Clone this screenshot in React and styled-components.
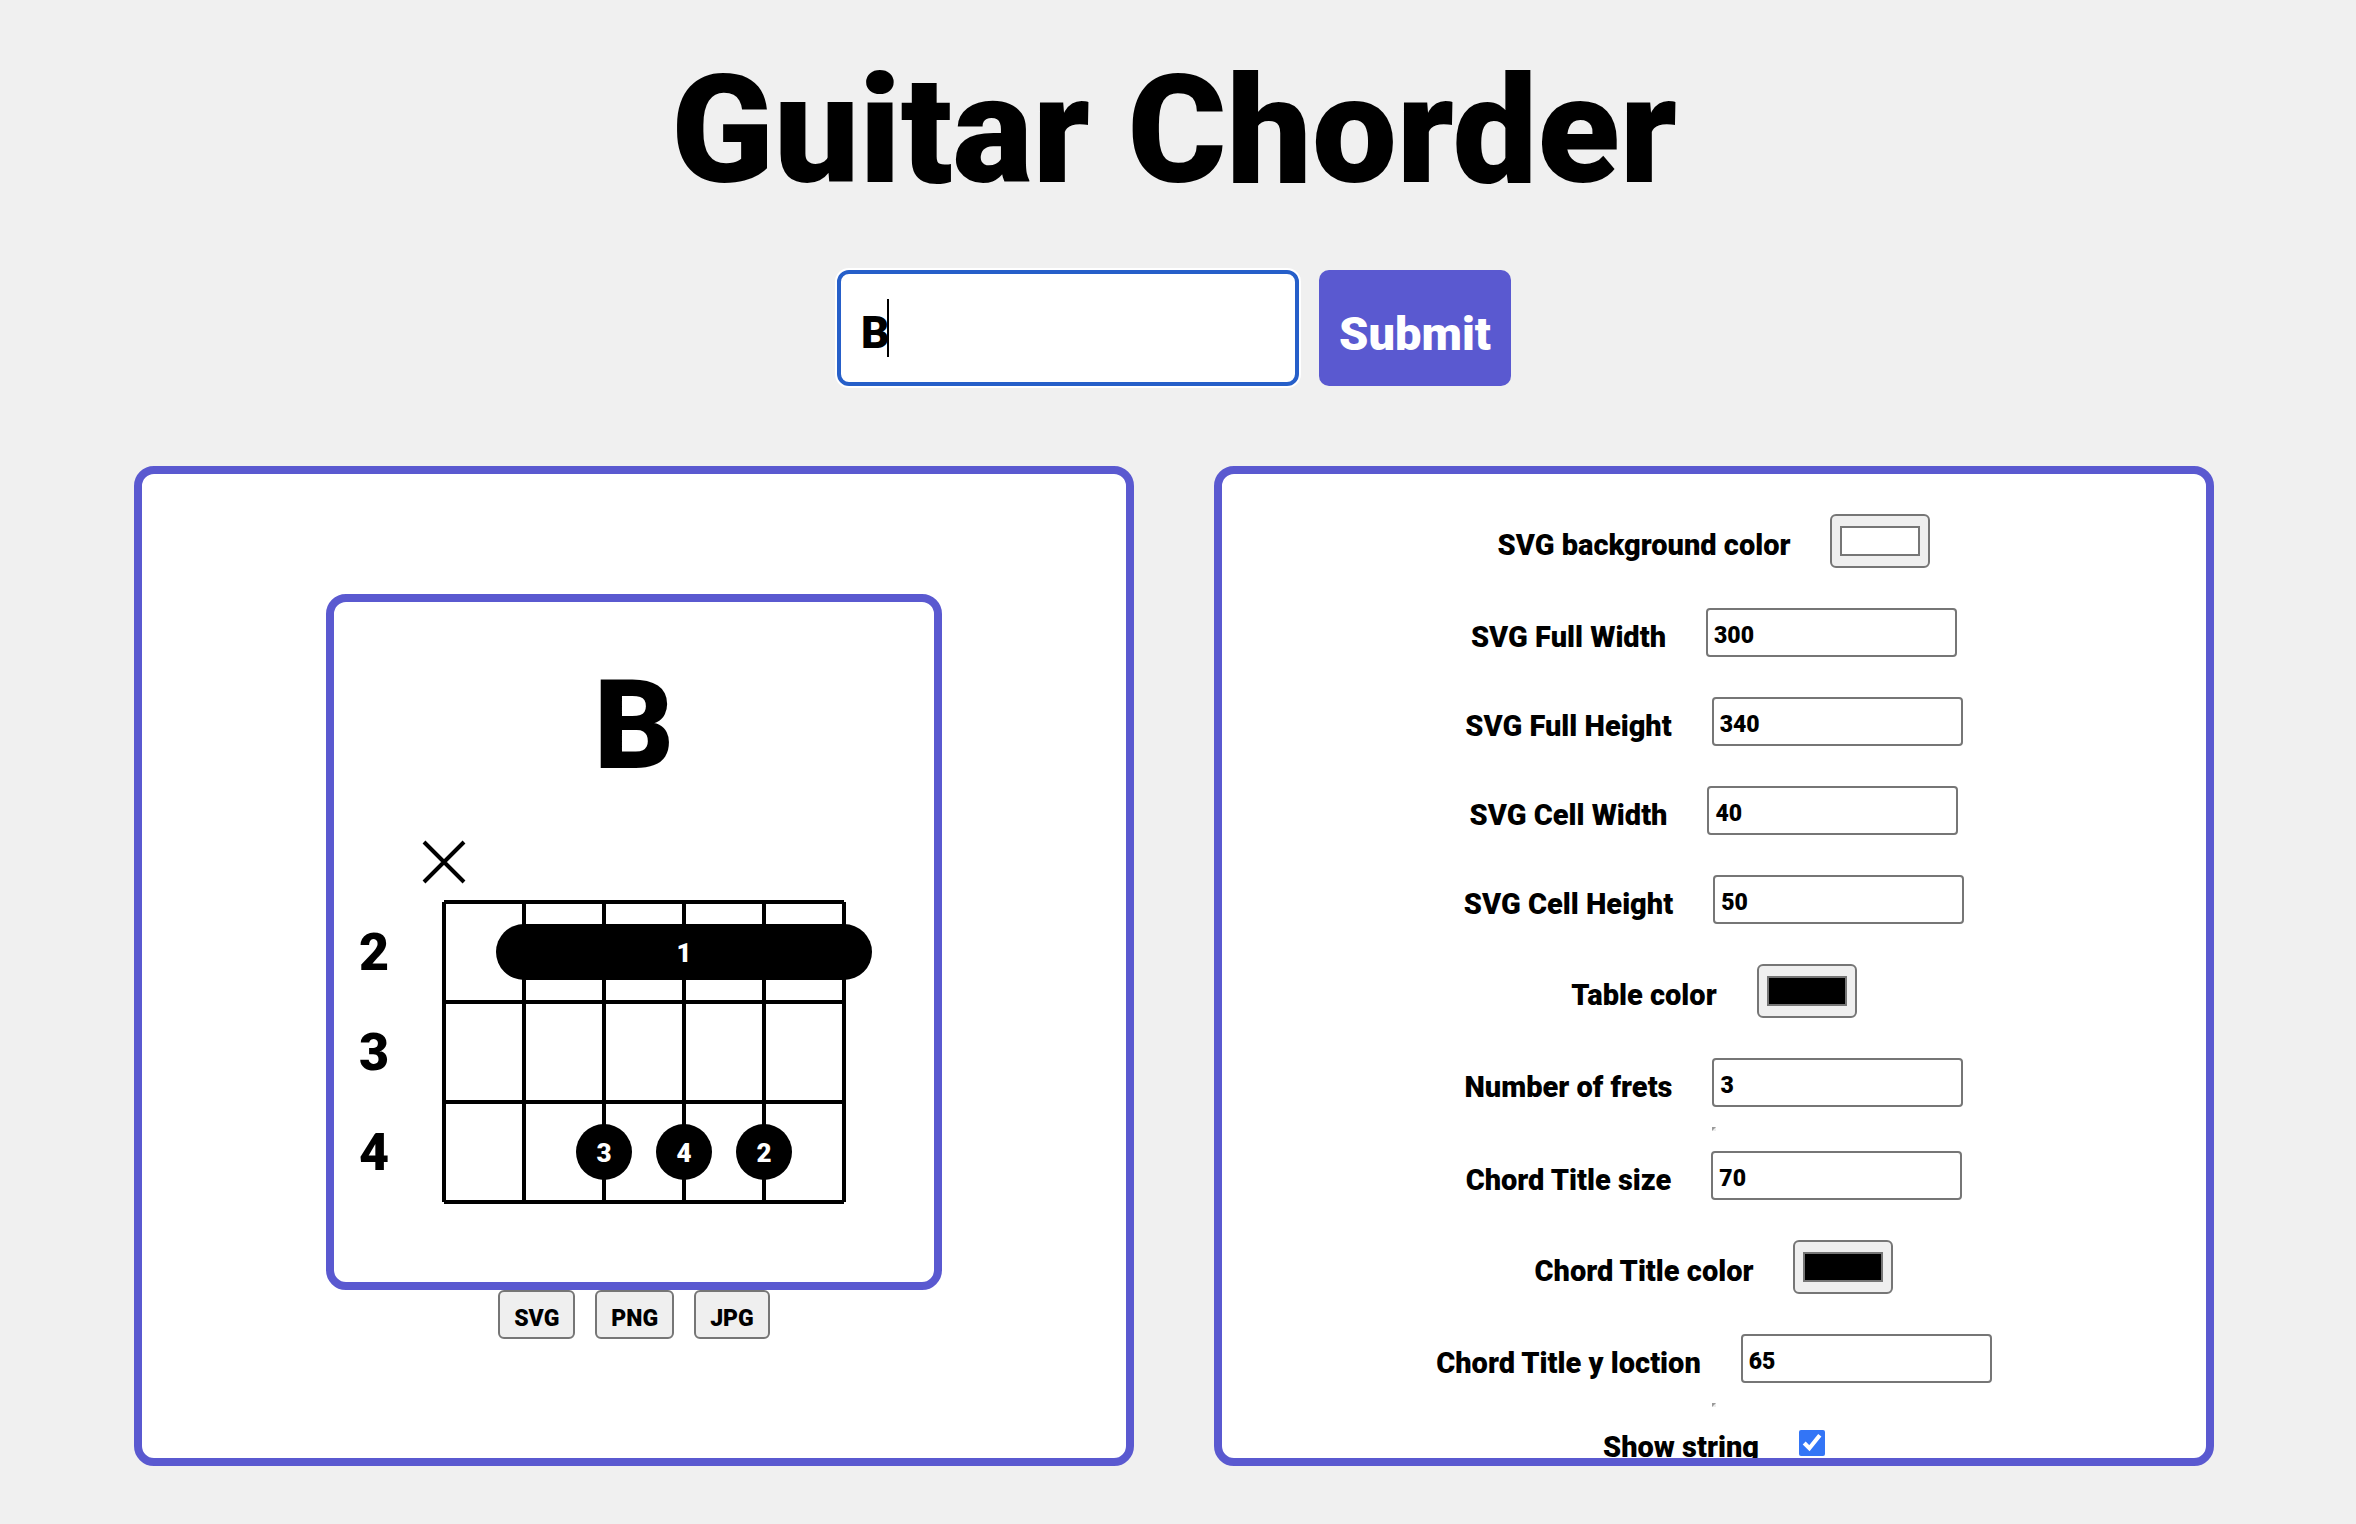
import React, { useState } from "react";
import styled, { createGlobalStyle } from "styled-components";

const GlobalStyle = createGlobalStyle`
  *, *::before, *::after { box-sizing: border-box; }
  body {
    margin: 0;
    background: #f0f0f0;
    color: #000;
    font-family: Roboto, "Liberation Sans", sans-serif;
    font-weight: 900;
  }
  button, input { font: inherit; color: inherit; margin: 0; }
`;

const Page = styled.main`
  padding: 51px 142px 58px 134px;
`;

const Title = styled.h1`
  margin: 0 0 59px;
  font-size: 151px;
  line-height: 160px;
  font-weight: 900;
  text-align: center;
`;

const ChordForm = styled.form`
  display: flex;
  justify-content: center;
  gap: 20px;
  margin-bottom: 80px;
`;

const ChordField = styled.div`
  position: relative;
  width: 462px;
`;

const ChordInput = styled.input`
  width: 100%;
  height: 116px;
  padding: 10px 20px 0;
  border: 4px solid #265fc9;
  border-radius: 12px;
  box-shadow: 0 0 0 2px #fff;
  outline: none;
  background: #fff;
  font-size: 44px;
  caret-color: transparent;
`;

const Caret = styled.span`
  position: absolute;
  left: 50px;
  top: 29px;
  width: 2px;
  height: 58px;
  background: #000;
`;

const SubmitButton = styled.button`
  width: 192px;
  height: 116px;
  padding: 10px 0 0;
  border: 0;
  border-radius: 10px;
  background: #5a59d0;
  color: #fff;
  font-size: 47px;
`;

const Panels = styled.div`
  display: grid;
  grid-template-columns: 1fr 1fr;
  gap: 80px;
`;

const Panel = styled.section`
  display: flex;
  flex-direction: column;
  align-items: center;
  justify-content: ${(p) => p.$justify};
  aspect-ratio: 1;
  min-height: 0;
  padding: ${(p) => p.$pad} 0;
  overflow: hidden;
  border: 8px solid #5a59d0;
  border-radius: 20px;
  background: #fff;
`;

const Frame = styled.div`
  display: flex;
  overflow: hidden;
  border: 8px solid #5a59d0;
  border-radius: 20px;
`;

const Downloads = styled.div`
  display: flex;
  gap: 20px;
`;

const DownloadButton = styled.button`
  height: 49px;
  padding: 8px 14px 0;
  border: 2px solid #767676;
  border-radius: 6px;
  background: #efefef;
  font-size: 23px;
`;

const Row = styled.div`
  display: flex;
  align-items: center;
  flex: none;
  gap: 40px;
  margin-bottom: ${(p) => p.$tight ? "20px" : "40px"};
`;

const Label = styled.label`
  padding-top: 8px;
  font-size: 29px;
  line-height: 24px;
  white-space: nowrap;
`;

const NumberInput = styled.input`
  width: 251px;
  height: 49px;
  padding: 6px 6px 0;
  border: 2px solid #767676;
  border-radius: 4px;
  background: #fff;
  font-size: 23px;
`;

const ColorInput = styled.input`
  appearance: none;
  width: 100px;
  height: 54px;
  padding: 0;
  border: 2px solid #767676;
  border-radius: 6px;
  background: #efefef;
  &::-webkit-color-swatch-wrapper { padding: 10px 8px; }
  &::-webkit-color-swatch { border: 2px solid #767676; border-radius: 0; }
`;

const CheckInput = styled.input`
  width: 26px;
  height: 26px;
  accent-color: #3375f6;
`;

const Divider = styled.hr`
  flex: none;
  width: 4px;
  height: 4px;
  margin: 0 0 20px;
  border: 2px solid;
  border-color: #9a9a9a #eee #eee #9a9a9a;
`;

const Chart = styled.svg`
  display: block;
  width: 600px;
  height: 680px;
  font-family: inherit;
  font-weight: 900;
  text-anchor: middle;
`;

const STRINGS = [55, 95, 135, 175, 215, 255];
const FRETS = [150, 200, 250, 300];
const FINGERS = [
  { x: 135, finger: 3 },
  { x: 175, finger: 4 },
  { x: 215, finger: 2 },
];

function ChordChart({ name }) {
  return (
    <Chart viewBox="0 0 300 340" role="img" aria-label={`${name} chord`}>
      <text x="150" y="83" fontSize="62">{name}</text>
      <g stroke="#000" strokeWidth="2">
        <path d="M45 120 65 140M65 120 45 140" />
        {STRINGS.map((x) => <line key={x} x1={x} y1="150" x2={x} y2="300" />)}
        {FRETS.map((y) => <line key={y} x1="55" y1={y} x2="255" y2={y} />)}
      </g>
      {[2, 3, 4].map((fret, i) => (
        <text key={fret} x="20" y={184 + i * 50} fontSize="26">{fret}</text>
      ))}
      <rect x="81" y="161" width="188" height="28" rx="14" />
      <text x="175" y="180" fontSize="13" fill="#fff">1</text>
      {FINGERS.map(({ x, finger }) => (
        <g key={x}>
          <circle cx={x} cy="275" r="14" />
          <text x={x} y="280" fontSize="13" fill="#fff">{finger}</text>
        </g>
      ))}
    </Chart>
  );
}

const SETTINGS = [
  { id: "bg", label: "SVG background color", type: "color", value: "#ffffff" },
  { id: "width", label: "SVG Full Width", type: "number", value: 300 },
  { id: "height", label: "SVG Full Height", type: "number", value: 340 },
  { id: "cellWidth", label: "SVG Cell Width", type: "number", value: 40 },
  { id: "cellHeight", label: "SVG Cell Height", type: "number", value: 50 },
  { id: "tableColor", label: "Table color", type: "color", value: "#000000" },
  { id: "frets", label: "Number of frets", type: "number", value: 3, divider: true },
  { id: "titleSize", label: "Chord Title size", type: "number", value: 70 },
  { id: "titleColor", label: "Chord Title color", type: "color", value: "#000000" },
  { id: "titleY", label: "Chord Title y loction", type: "number", value: 65, divider: true },
  { id: "showString", label: "Show string", type: "checkbox" },
];

function Setting({ id, label, type, value, divider }) {
  return (
    <>
      <Row $tight={divider}>
        <Label htmlFor={id}>{label}</Label>
        {type === "color" && <ColorInput id={id} type="color" defaultValue={value} />}
        {type === "number" && <NumberInput id={id} type="number" defaultValue={value} />}
        {type === "checkbox" && <CheckInput id={id} type="checkbox" defaultChecked />}
      </Row>
      {divider && <Divider />}
    </>
  );
}

export default function App() {
  const [text, setText] = useState("B");
  const [chord, setChord] = useState("B");
  const submit = (e) => {
    e.preventDefault();
    setChord(text);
  };
  return (
    <>
      <GlobalStyle />
      <Page>
        <Title>Guitar Chorder</Title>
        <ChordForm onSubmit={submit}>
          <ChordField>
            <ChordInput
              aria-label="Chord"
              value={text}
              onChange={(e) => setText(e.target.value)}
            />
            <Caret />
          </ChordField>
          <SubmitButton type="submit">Submit</SubmitButton>
        </ChordForm>
        <Panels>
          <Panel $justify="center" $pad="0">
            <Frame><ChordChart name={chord} /></Frame>
            <Downloads>
              {["SVG", "PNG", "JPG"].map((format) => (
                <DownloadButton key={format} type="button">{format}</DownloadButton>
              ))}
            </Downloads>
          </Panel>
          <Panel $justify="flex-start" $pad="40px">
            {SETTINGS.map((s) => <Setting key={s.id} {...s} />)}
          </Panel>
        </Panels>
      </Page>
    </>
  );
}
